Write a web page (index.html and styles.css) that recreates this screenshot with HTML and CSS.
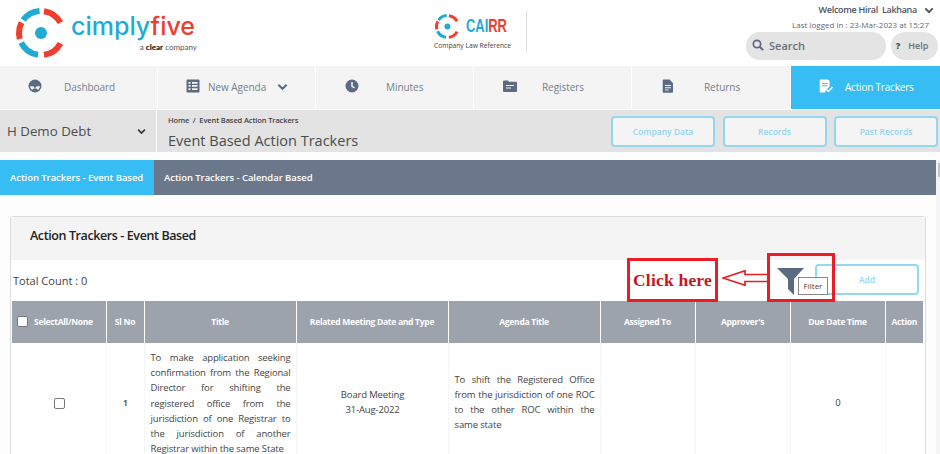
FILE: index.html
```html
<!DOCTYPE html>
<html lang="en">
<head>
<meta charset="utf-8">
<title>Event Based Action Trackers</title>
<link rel="stylesheet" href="styles.css">
</head>
<body>
<svg class="defs" width="0" height="0" aria-hidden="true">
  <symbol id="ring" viewBox="0 0 50 50">
    <g fill="none" stroke-width="6" transform="rotate(-90 25 25)">
      <circle cx="25" cy="25" r="22" pathLength="360" stroke="#ef3d2e" stroke-dasharray="54 306" stroke-dashoffset="-8"/>
      <circle cx="25" cy="25" r="22" pathLength="360" stroke="#ef3d2e" stroke-dasharray="54 306" stroke-dashoffset="-118"/>
      <circle cx="25" cy="25" r="22" pathLength="360" stroke="#1fabd4" stroke-dasharray="56 304" stroke-dashoffset="-188"/>
      <circle cx="25" cy="25" r="22" pathLength="360" stroke="#ef3d2e" stroke-dasharray="44 316" stroke-dashoffset="-254"/>
      <circle cx="25" cy="25" r="22" pathLength="360" stroke="#1fabd4" stroke-dasharray="50 310" stroke-dashoffset="-306"/>
    </g>
    <circle cx="25" cy="25" r="6" fill="#1fabd4"/>
  </symbol>
  <symbol id="chev" viewBox="0 0 12 8">
    <path d="M1.500 1.500 6 6l4.500-4.500" fill="none" stroke="currentColor" stroke-width="2.200"/>
  </symbol>
</svg>

<header class="top">
  <div class="logo">
    <svg class="logo-ring"><use href="#ring"/></svg>
    <div class="logo-text">
      <div class="logo-name">cimply<span class="logo-five">five</span></div>
      <div class="logo-sub">a <b>clear</b> company</div>
    </div>
  </div>
  <div class="cairr">
    <div class="cairr-row">
      <svg class="cairr-ring"><use href="#ring"/></svg>
      <span class="cairr-name">CAI<span class="cairr-red">RR</span></span>
    </div>
    <div class="cairr-sub">Company Law Reference</div>
  </div>
  <div class="user">
    <div class="welcome">Welcome Hiral&nbsp; Lakhana <svg class="welcome-chev"><use href="#chev"/></svg></div>
    <div class="logged">Last logged in : 23-Mar-2023 at 15:27</div>
    <div class="user-actions">
      <div class="search">
        <svg class="search-icon" viewBox="0 0 14 14"><circle cx="5.800" cy="5.800" r="4.300" fill="none" stroke="#5d6b82" stroke-width="2"/><path d="M9 9l4 4" stroke="#5d6b82" stroke-width="2.400"/></svg>
        <span>Search</span>
      </div>
      <div class="help"><b class="help-mark">?</b><span>Help</span></div>
    </div>
  </div>
</header>

<nav class="nav">
  <a class="nav-item gap-dash">
    <svg class="nav-icon" viewBox="0 0 14 14"><circle cx="7" cy="7" r="6.500" fill="#5d6b82"/><path fill="#f4f4f4" d="M2 7.200h3.300L7 9.200l1.700-2H12a5 5 0 0 1-2 3.700 3.600 3.600 0 0 0-6 0 5 5 0 0 1-2-3.700z"/></svg>
    <span>Dashboard</span>
  </a>
  <a class="nav-item gap-agenda">
    <svg class="nav-icon" viewBox="0 0 14 14"><path fill="#5d6b82" fill-rule="evenodd" d="M1.500.5h11a1 1 0 0 1 1 1v11a1 1 0 0 1-1 1h-11a1 1 0 0 1-1-1v-11a1 1 0 0 1 1-1zM2.500 3v1.700h2V3zm3.500 0v1.700h5.500V3zM2.500 6.100v1.700h2V6.100zm3.500 0v1.700h5.500V6.100zM2.500 9.300V11h2V9.300zm3.500 0V11h5.500V9.300z"/></svg>
    <span>New Agenda</span>
    <svg class="nav-chev"><use href="#chev"/></svg>
  </a>
  <a class="nav-item gap-minutes">
    <svg class="nav-icon" viewBox="0 0 14 14"><circle cx="7" cy="7" r="6.500" fill="#5d6b82"/><path d="M7 3v4.300l2.600 1.500" fill="none" stroke="#f4f4f4" stroke-width="1.500"/></svg>
    <span>Minutes</span>
  </a>
  <a class="nav-item gap-registers">
    <svg class="nav-icon" viewBox="0 0 14 14"><path fill="#5d6b82" fill-rule="evenodd" d="M0 2.500a1 1 0 0 1 1-1h4l1.200 1.300H13a1 1 0 0 1 1 1V12a1 1 0 0 1-1 1H1a1 1 0 0 1-1-1zM3 6v1h8V6zm0 2.500v1h5v-1z"/></svg>
    <span>Registers</span>
  </a>
  <a class="nav-item gap-returns">
    <svg class="nav-icon" viewBox="0 0 14 14"><path fill="#5d6b82" fill-rule="evenodd" d="M2.500.5h6l3.500 3.500v9a.8.800 0 0 1-.8.8H2.500a.8.800 0 0 1-.8-.8V1.300a.8.800 0 0 1 .8-.8zM4 6v1h6V6zm0 2.300v1h6v-1zm0 2.300v1h3.500v-1z"/></svg>
    <span>Returns</span>
  </a>
  <a class="nav-item nav-active gap-action">
    <svg class="nav-icon" viewBox="0 0 14 14"><path fill="#fff" fill-rule="evenodd" d="M1.500.5h7.500l1.500 1.500v5.500L7 11l-1 2.500H1.500a.8.800 0 0 1-.8-.8V1.300a.8.800 0 0 1 .8-.8zM3 4v1h5.500V4zm0 2.300v1h5.500v-1z"/><path d="M7.500 10.500l2 2 4-4.500" fill="none" stroke="#fff" stroke-width="1.400"/></svg>
    <span>Action Trackers</span>
  </a>
</nav>

<section class="sub">
  <div class="company">
    <span>H Demo Debt</span>
    <svg class="company-chev"><use href="#chev"/></svg>
  </div>
  <div class="crumbs">
    <div class="crumb-line">Home &nbsp;/&nbsp; Event Based Action Trackers</div>
    <h1 class="page-title">Event Based Action Trackers</h1>
  </div>
  <div class="sub-actions">
    <button class="btn-outline">Company Data</button>
    <button class="btn-outline">Records</button>
    <button class="btn-outline">Past Records</button>
  </div>
</section>

<main class="content">
  <div class="tabs">
    <div class="tab tab-active">Action Trackers - Event Based</div>
    <div class="tab">Action Trackers - Calendar Based</div>
  </div>

  <section class="panel">
    <h2 class="panel-head">Action Trackers - Event Based</h2>
    <div class="toolbar">
      <span class="count">Total Count : 0</span>
      <svg class="funnel" viewBox="0 0 27 27"><path fill="#5d6b82" d="M0 0h27L17 11v16l-6-6V11z"/></svg>
      <button class="btn-add">Add</button>

      <div class="click-box">Click here</div>
      <svg class="click-arrow" viewBox="0 0 46 16"><path d="M46 4.500H23V.8L1 8l22 7.200v-3.700h23" fill="#fff" stroke="#ed1c24" stroke-width="1.700"/></svg>
      <div class="filter-box"></div>
      <div class="tooltip">Filter</div>
    </div>

    <table class="grid">
      <colgroup>
        <col class="c1"><col class="c2"><col class="c3"><col class="c4"><col class="c5"><col class="c6"><col class="c7"><col class="c8"><col class="c9">
      </colgroup>
      <thead>
        <tr>
          <th><span class="select-all"><input class="check" type="checkbox" aria-label="Select all">SelectAll/None</span></th>
          <th>Sl No</th>
          <th>Title</th>
          <th>Related Meeting Date and Type</th>
          <th>Agenda Title</th>
          <th>Assigned To</th>
          <th>Approver's</th>
          <th>Due Date Time</th>
          <th>Action</th>
        </tr>
      </thead>
      <tbody>
        <tr>
          <td class="center"><input class="check" type="checkbox" aria-label="Select row"></td>
          <td class="center num">1</td>
          <td class="just cell-title">To make application seeking confirmation from the Regional Director for shifting the registered office from the jurisdiction of one Registrar to the jurisdiction of another Registrar within the same State</td>
          <td class="center">Board Meeting<br>31-Aug-2022</td>
          <td class="just">To shift the Registered Office from the jurisdiction of one ROC to the other ROC within the same state</td>
          <td></td>
          <td></td>
          <td class="center">0</td>
          <td></td>
        </tr>
      </tbody>
    </table>
  </section>
  <div class="scroll-track"><div class="scroll-thumb"></div></div>
</main>
</body>
</html>
```
FILE: styles.css
```css
* { box-sizing: border-box; }
html, body { margin: 0; height: 454px; overflow: hidden; }
body { width: 940px; background: #fff; font-family: "Open Sans", "Liberation Sans", sans-serif; color: #444; }
.defs { position: absolute; }

/* header */
.top { height: 66px; display: flex; position: relative; }
.logo { width: 435px; padding: 8px 0 0 16px; display: flex; align-items: flex-start; }
.logo-ring { width: 50px; height: 50px; }
.logo-text { margin-left: 5px; width: 126px; }
.logo-name { font-family: Inter, sans-serif; font-size: 25px; font-weight: 500; line-height: 32px; height: 32px; color: #1fabd4; margin-top: 2px; white-space: nowrap; font-variant-ligatures: none; }
.logo-five { color: #ef3d2e; }
.logo-sub { font-family: Lato, sans-serif; font-size: 8px; line-height: 10px; color: #555; text-align: right; margin-top: 0; }
.logo-sub b { color: #111; font-weight: 900; }
.cairr { width: 92px; height: 41px; margin-top: 11px; border-right: 1px solid #ddd; }
.cairr-row { display: flex; align-items: center; gap: 6px; height: 28px; margin-top: 1px; }
.cairr-ring { width: 27px; height: 27px; }
.cairr-name { font-family: "Liberation Sans Narrow", "Liberation Sans", sans-serif; font-weight: 700; font-size: 19px; color: #1fabd4; transform: scaleX(.68); transform-origin: left center; }
.cairr-red { color: #ef3d2e; }
.cairr-sub { font-size: 6.700px; line-height: 10px; color: #444; font-weight: 400; margin-top: 1px; margin-left: -1px; white-space: nowrap; }
.user { flex: 1; display: flex; flex-direction: column; align-items: flex-end; padding-right: 2px; }
.welcome { font-size: 9px; line-height: 12px; font-weight: 600; letter-spacing: -.3px; color: #4c5563; margin-top: 4px; display: flex; align-items: center; gap: 5px; padding-right: 4px; white-space: pre; }
.welcome-chev { width: 10px; height: 7px; }
.logged { font-size: 8px; line-height: 11px; color: #667; margin-top: 3px; margin-right: 9px; }
.user-actions { display: flex; gap: 5px; margin-top: 2px; }
.search { width: 140px; height: 28px; border-radius: 14px; background: #e4e4e4; display: flex; align-items: center; padding: 0 0 2px 6px; gap: 5px; color: #68707d; font-size: 11px; font-weight: 600; }
.search-icon { width: 12px; height: 12px; }
.help { width: 47px; height: 28px; border-radius: 14px; background: #e4e4e4; display: flex; align-items: center; justify-content: center; gap: 8px; padding: 0 5px 2px 0; color: #68707d; font-size: 9px; font-weight: 600; }
.help-mark { color: #4c5563; }

/* nav */
.nav { height: 43px; display: grid; grid-template-columns: 158px 158px 158px 158px 159px 149px; background: #f4f4f4; }
.nav-item { display: flex; align-items: center; padding: 0 0 2px 28px; border-right: 1px solid #fff; font-size: 10px; letter-spacing: -.05px; color: #77808e; }
.nav-icon { width: 14px; height: 14px; flex: none; margin-top: -1px; }
.gap-dash { gap: 22px; }
.gap-agenda { gap: 8px; }
.gap-minutes { gap: 27px; padding-left: 29px; }
.gap-registers { gap: 25px; padding-left: 29px; }
.gap-returns { gap: 29px; padding-left: 29px; }
.gap-action { gap: 12px; }
.nav-chev { width: 11px; height: 8px; margin-left: 3px; color: #5d6b82; }
.nav-active { background: #36bdf3; color: #fff; border-right: 0; letter-spacing: -.2px; }

/* sub header */
.sub { height: 43px; border-top: 1px solid #fff; background: #e3e3e3; display: flex; }
.company { width: 157px; border-right: 1px solid #fff; display: flex; align-items: center; justify-content: space-between; padding: 0 10px 0 7px; font-size: 13.300px; color: #4c4c4c; }
.company-chev { width: 9px; height: 7px; color: #333; }
.crumbs { padding-left: 11px; flex: 1; }
.crumb-line { font-size: 7.500px; line-height: 10px; letter-spacing: -.12px; color: #444; margin-top: 5px; font-weight: 600; }
.page-title { margin: 7px 0 0; font-size: 14.500px; line-height: 18px; font-weight: 400; color: #4c4c4c; }
.sub-actions { display: flex; gap: 7.500px; padding: 6px 2px 0 0; }
.btn-outline { width: 104px; height: 31px; border: 2px solid #93d7f1; border-radius: 4px; background: #f4f4f4; color: #8fd6f2; font: 600 8.500px "Open Sans", sans-serif; padding: 0; }

/* content */
.content { position: relative; background: #fdfdfd; height: 302px; padding-top: 8px; }
.scroll-track { position: absolute; right: 0; top: 8px; bottom: 0; width: 4px; background: #f5f5f5; }
.scroll-thumb { margin: 3px 0 0 2px; width: 2px; height: 14px; background: #c4c4c4; }
.tabs { height: 35px; width: 936px; background: #6b778a; display: flex; font-size: 9.500px; letter-spacing: -.06px; color: #fff; font-weight: 600; }
.tab { display: flex; align-items: center; padding: 0 10px; }
.tab-active { width: 154px; background: #36bdf3; white-space: nowrap; }
.panel { margin: 21px 0 0 10px; width: 916px; border: 1px solid #ddd; border-bottom: 0; border-radius: 4px 4px 0 0; background: #fff; }
.panel-head { margin: 0; height: 43px; background: #f4f4f4; padding: 9px 0 0 19px; font-size: 12.500px; line-height: 20px; letter-spacing: -.4px; font-weight: 600; color: #222; }

.toolbar { height: 41px; position: relative; display: flex; align-items: center; padding: 0 6px 0 2px; }
.count { flex: 1; font-size: 11px; color: #444; margin-top: -1px; }
.funnel { width: 27px; height: 27px; margin-right: 11px; margin-top: 8px; align-self: flex-start; }
.btn-add { width: 104px; height: 31px; border: 2px solid #93d7f1; border-radius: 4px; background: #fff; color: #8fd6f2; font: 600 8.500px "Open Sans", sans-serif; padding: 0; margin-top: -2px; }

.click-box { position: absolute; left: 616px; top: -2px; width: 91px; height: 44px; border: 3px solid #ed1c24; background: #fff; color: #c8141c; font: 700 17.500px/38px "Liberation Serif", serif; letter-spacing: .2px; text-align: center; white-space: nowrap; }
.click-arrow { position: absolute; left: 711px; top: 10px; width: 46px; height: 16px; }
.filter-box { position: absolute; left: 756px; top: -7px; width: 68px; height: 49px; border: 3px solid #ed1c24; }
.tooltip { position: absolute; left: 787px; top: 17px; width: 30px; height: 18px; border: 1px solid #888; background: #fff; font-size: 8px; line-height: 16px; text-align: center; color: #444; }

/* table */
.grid { width: 911px; margin-left: 1px; border-collapse: collapse; table-layout: fixed; font-size: 9.500px; line-height: 15.200px; letter-spacing: -.15px; color: #444; }
.c1 { width: 94px; } .c2 { width: 38px; } .c3 { width: 152px; } .c4 { width: 152px; } .c5 { width: 152px; }
.c6 { width: 95px; } .c7 { width: 95px; } .c8 { width: 95px; } .c9 { width: 38px; }
.grid th { height: 42px; background: #9ca3ad; color: #fff; font-size: 8.500px; letter-spacing: -.28px; font-weight: 700; border-left: 1px solid #fff; padding: 0 2px; white-space: nowrap; }
.grid th:first-child { border-left: 0; }
.grid td { border-left: 1px solid #f6f6f6; padding: 6px 5px 5px 6px; height: 117px; vertical-align: middle; }
.grid td:first-child { border-left: 0; }
.grid td.cell-title { padding: 7px 5px 4px 6px; }
.select-all { display: flex; align-items: center; justify-content: flex-start; gap: 6px; padding-left: 3px; }
.check { appearance: none; width: 11px; height: 11px; margin: 0; border: 1px solid #767676; border-radius: 2px; background: #fff; flex: none; vertical-align: middle; }
.center { text-align: center; }
.num { font-weight: 600; }
.just { text-align: justify; }
```
